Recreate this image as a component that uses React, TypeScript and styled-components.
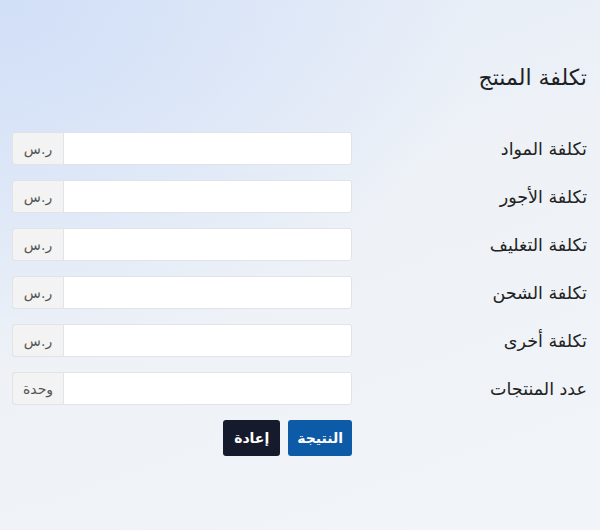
import { FC } from 'react';
import { styled, createGlobalStyle } from 'styled-components';

const GlobalStyle = createGlobalStyle`
  html, body {
    margin: 0;
    padding: 0;
    height: 100%;
  }
  body {
    font-family: "DejaVu Sans", "Noto Sans", sans-serif;
    background: #eef2f7;
  }
  #root {
    min-height: 100%;
  }
`;

type Field = {
  label: string;
  unit: string;
};

const fields: Field[] = [
  { label: 'تكلفة المواد', unit: 'ر.س' },
  { label: 'تكلفة الأجور', unit: 'ر.س' },
  { label: 'تكلفة التغليف', unit: 'ر.س' },
  { label: 'تكلفة الشحن', unit: 'ر.س' },
  { label: 'تكلفة أخرى', unit: 'ر.س' },
  { label: 'عدد المنتجات', unit: 'وحدة' },
];

const App: FC = () => {
  return (
    <Page dir="rtl">
      <GlobalStyle />
      <Title>تكلفة المنتج</Title>
      <Form onSubmit={(e) => e.preventDefault()}>
        {fields.map((f) => (
          <Row key={f.label}>
            <Label>{f.label}</Label>
            <InputGroup>
              <Input type="text" />
              <Addon>{f.unit}</Addon>
            </InputGroup>
          </Row>
        ))}
        <Row>
          <span />
          <Actions>
            <Button $variant="primary" type="submit">
              النتيجة
            </Button>
            <Button $variant="dark" type="reset">
              إعادة
            </Button>
          </Actions>
        </Row>
      </Form>
    </Page>
  );
};

export default App;

const Page = styled.div`
  box-sizing: border-box;
  width: 600px;
  height: 530px;
  padding: 61px 13px 0 12px;
  background:
    radial-gradient(ellipse 80% 70% at 0% 0%, #d1dff7 0%, rgba(209, 223, 247, 0) 100%),
    linear-gradient(160deg, #e3ebf8 0%, #eef2f7 45%, #f1f4f8 100%);
  color: #1f2328;
`;

const Title = styled.h1`
  margin: 0 0 37px;
  font-size: 22px;
  font-weight: normal;
  line-height: 34px;
  color: #1d2125;
`;

const Form = styled.form`
  display: flex;
  flex-direction: column;
  gap: 15px;
`;

const Row = styled.div`
  display: grid;
  grid-template-columns: 1fr 340px;
  align-items: center;
`;

const Label = styled.label`
  font-size: 17.5px;
  color: #222;
`;

const InputGroup = styled.div`
  display: flex;
  height: 33px;
`;

const Input = styled.input`
  flex: 1;
  min-width: 0;
  box-sizing: border-box;
  height: 100%;
  border: 1px solid #e0e3e7;
  border-radius: 0 3px 3px 0;
  background: #fff;
  font: inherit;
  padding: 0 10px;
  outline: none;
`;

const Addon = styled.span`
  box-sizing: border-box;
  width: 51px;
  display: flex;
  align-items: center;
  justify-content: center;
  background: #f3f3f3;
  border: 1px solid #e0e3e7;
  border-right: none;
  border-radius: 3px 0 0 3px;
  font-size: 14px;
  color: #555;
`;

const Actions = styled.div`
  display: flex;
  gap: 8px;
`;

const Button = styled.button<{ $variant: 'primary' | 'dark' }>`
  height: 36px;
  padding: 0 ${(p) => (p.$variant === 'primary' ? '9px' : '11px')};
  border: none;
  border-radius: 3px;
  font-family: inherit;
  font-size: 14px;
  font-weight: bold;
  color: #fff;
  background: ${(p) => (p.$variant === 'primary' ? '#0d5aa7' : '#151b2c')};
  cursor: pointer;
`;
